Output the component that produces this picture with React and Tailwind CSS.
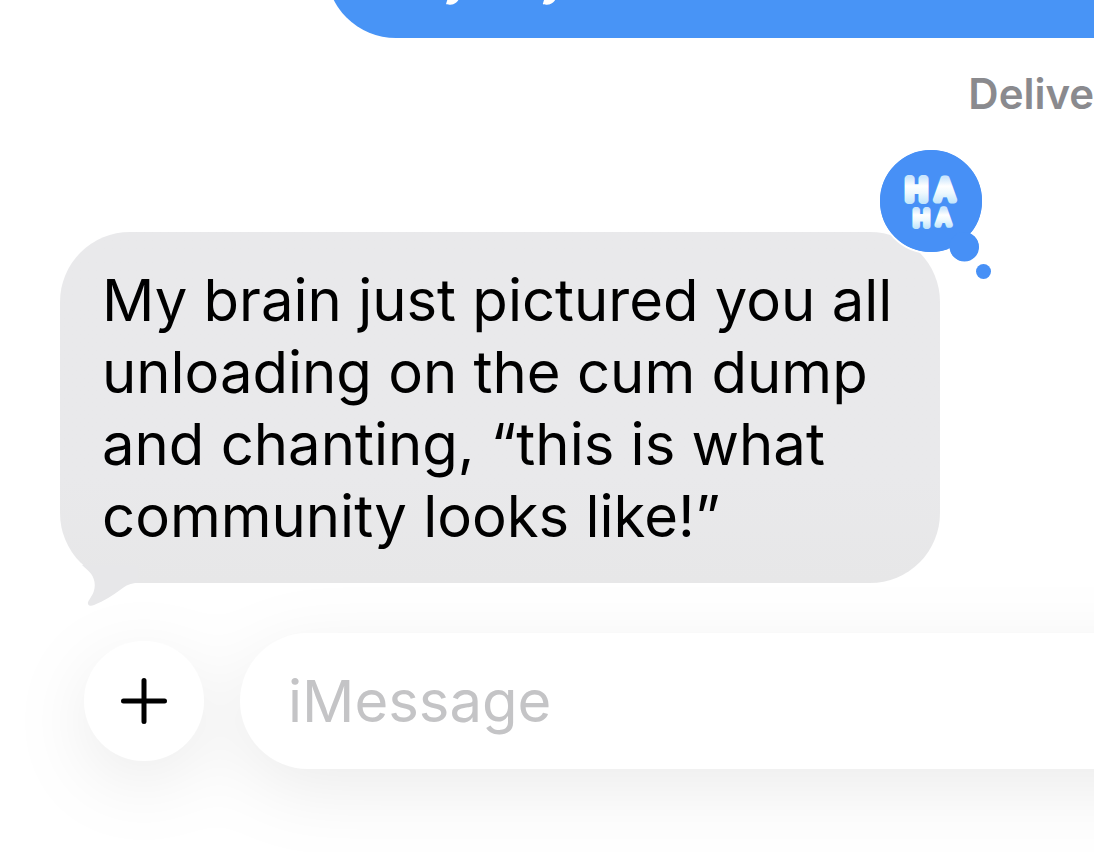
import React from "react";

function OutgoingBubble() {
  return (
    <div className="flex h-[38px] items-end overflow-hidden pl-[326px]">
      <div className="flex flex-1 gap-[63px] rounded-bl-[70px] bg-[#4894f6] pb-8 pl-[116px] text-[60px] leading-[72px] text-white">
        <span>y</span>
        <span>y</span>
      </div>
    </div>
  );
}

function HahaTapback() {
  return (
    <svg
      className="absolute -top-[84px] -right-[54px] h-[134px] w-[116px]"
      viewBox="0 0 116 134"
      role="img"
      aria-label="Haha reaction"
    >
      <defs>
        <linearGradient id="puff" x1="0" y1="0" x2="0" y2="1">
          <stop offset="0.15" stopColor="#cbe6fd" />
          <stop offset="0.4" stopColor="#ffffff" />
          <stop offset="0.6" stopColor="#eef9fe" />
          <stop offset="0.9" stopColor="#c3e6fb" />
        </linearGradient>
      </defs>
      <g fill="#4790f6" stroke="#ffffff" strokeWidth="2">
        <circle cx="53" cy="53" r="52" />
        <circle cx="86.5" cy="99" r="15.5" />
      </g>
      <g fill="#4790f6">
        <circle cx="53" cy="53" r="51" />
        <circle cx="86" cy="98.500" r="14.500" />
        <circle cx="105.5" cy="123.5" r="7.5" />
      </g>
      <g
        fill="url(#puff)"
        stroke="url(#puff)"
        strokeLinejoin="round"
        fontFamily="Inter, sans-serif"
        fontWeight="300"
        textAnchor="middle"
      >
        <text x="38.500" y="52" fontSize="29" strokeWidth="8">H</text>
        <text x="67" y="51.500" fontSize="28" strokeWidth="7">A</text>
        <text x="43.500" y="77.500" fontSize="22" strokeWidth="6">H</text>
        <text x="65.500" y="77" fontSize="21" strokeWidth="5.500">A</text>
      </g>
    </svg>
  );
}

function IncomingBubble() {
  return (
    <div className="relative mr-[154px] ml-[60px] max-w-[880px] rounded-[70px] bg-linear-to-b from-[#e9e9eb] from-70% to-[#e7e7e8] px-[42px] pt-8 pb-[31px]">
      <p className="text-[58px] leading-[72px] text-black">
        My brain just pictured you all unloading on the cum dump and chanting,
        “this is what community looks like!”
      </p>
      <svg
        className="absolute top-[322px] left-[15px] h-[54px] w-[65px]"
        viewBox="0 0 65 54"
        aria-hidden="true"
      >
        <path
          d="M7 11C12 16 18 19 19.500 28C21 37 16 43 13.500 47C11.500 51 15 53 19 51C29 47 38 41 45 36C52 31 55 29 63 29L63 11Z"
          fill="#e7e7e9"
        />
      </svg>
      <HahaTapback />
    </div>
  );
}

function Composer() {
  return (
    <form
      className="mt-[50px] -mr-24 flex items-center gap-9 pl-[84px] drop-shadow-[0_20px_36px_rgba(0,0,0,0.08)]"
      onSubmit={(e) => e.preventDefault()}
    >
      <button
        type="button"
        aria-label="Add attachment"
        className="flex size-[120px] shrink-0 items-center justify-center rounded-full bg-white"
      >
        <svg
          className="size-[46px]"
          viewBox="0 0 46 46"
          stroke="#000"
          strokeWidth="5"
          strokeLinecap="round"
          aria-hidden="true"
        >
          <path d="M23 2.500V43.500M2.500 23H43.500" />
        </svg>
      </button>
      <input
        type="text"
        aria-label="iMessage"
        placeholder="iMessage"
        className="h-[136px] min-w-0 flex-1 rounded-l-[68px] bg-white pl-12 text-[58px] text-black outline-none placeholder:text-[#c4c4c6]"
      />
    </form>
  );
}

export default function App() {
  return (
    <main className="min-h-screen overflow-hidden bg-white font-['Inter',sans-serif]">
      <OutgoingBubble />
      <div className="mt-7 mb-[110px] flex justify-end">
        <p className="-mr-[67px] text-[42px] leading-[56px] font-semibold text-[#8a8a8e]">
          Delivered
        </p>
      </div>
      <IncomingBubble />
      <Composer />
    </main>
  );
}
